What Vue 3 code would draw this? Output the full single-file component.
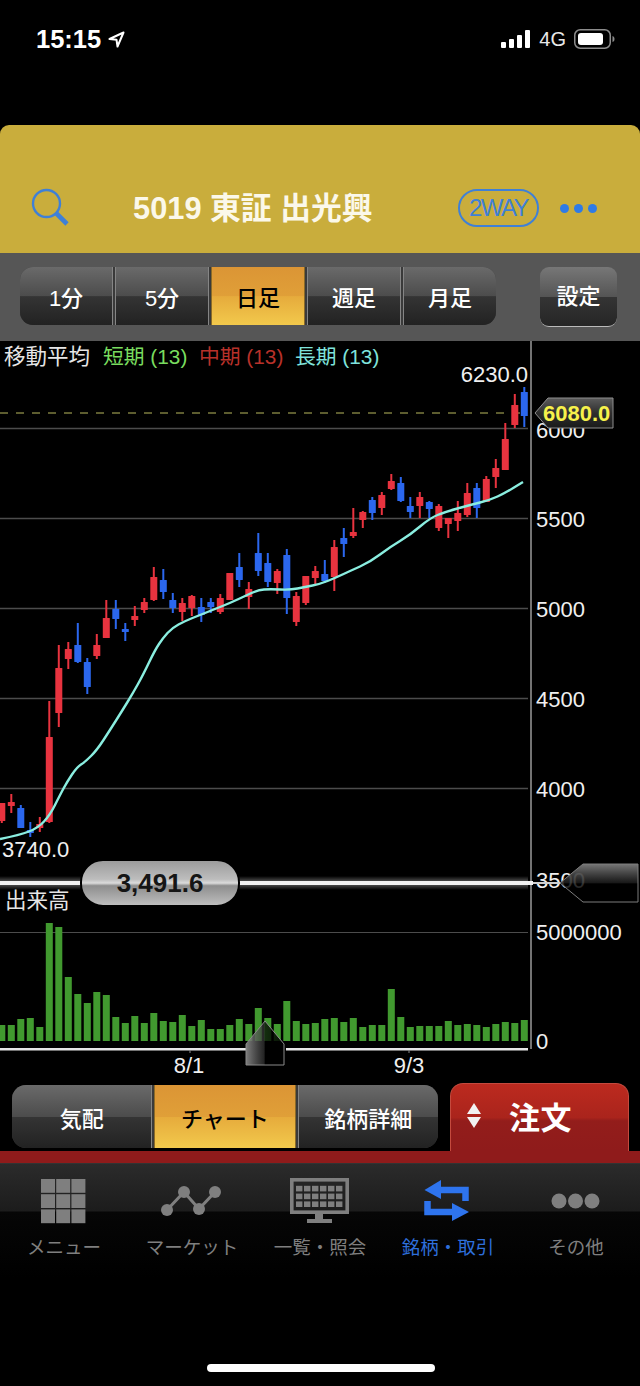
<template>
  <div class="screen">
    <div class="status-bar">
      <div class="status-left">
        <span class="time">15:15</span>
        <svg class="loc" width="17" height="17" viewBox="0 0 17 17">
          <path d="M15.5 1.5 L1.5 8 L8.5 8.7 L9.5 15.5 Z" fill="none" stroke="#fff" stroke-width="2" stroke-linejoin="round" />
        </svg>
      </div>
      <div class="status-right">
        <svg width="30" height="20" viewBox="0 0 30 20">
          <rect x="0" y="13" width="5" height="6" rx="1" fill="#fff" />
          <rect x="8" y="10" width="5" height="9" rx="1" fill="#fff" />
          <rect x="16" y="6" width="5" height="13" rx="1" fill="#fff" />
          <rect x="24" y="1" width="5" height="18" rx="1" fill="#fff" />
        </svg>
        <span class="net">4G</span>
        <svg width="41" height="20" viewBox="0 0 41 20">
          <rect x="0.75" y="0.75" width="35.5" height="18.5" rx="5.5" fill="none" stroke="#8c8c8c" stroke-width="1.5" />
          <rect x="4" y="4" width="25" height="12" rx="3" fill="#fff" />
          <path d="M38.5 7 C40 7.5 40.5 8.5 40.5 10 C40.5 11.5 40 12.5 38.5 13 Z" fill="#8c8c8c" />
        </svg>
      </div>
    </div>

    <header class="title-bar">
      <svg class="search" width="38" height="38" viewBox="0 0 38 38">
        <circle cx="15.5" cy="15.5" r="13.5" fill="none" stroke="#3f80d6" stroke-width="2.4" />
        <path d="M25 25 L36 36" stroke="#3f80d6" stroke-width="4.6" stroke-linecap="butt" />
      </svg>
      <h1 class="title">5019 東証 出光興</h1>
      <span class="two-way">2WAY</span>
      <div class="more"><i></i><i></i><i></i></div>
    </header>

    <div class="period-bar">
      <div class="segments period">
        <div
          v-for="p in periods"
          :key="p"
          class="seg"
          :class="{ active: p === '日足' }"
        >{{ p }}</div>
      </div>
      <div class="settings">設定</div>
    </div>

    <svg class="chart" width="640" height="742" viewBox="0 341 640 742">
      <defs>
        <linearGradient id="priceTag" x1="0" y1="0" x2="0" y2="1">
          <stop offset="0" stop-color="#5c5c5c" />
          <stop offset="0.5" stop-color="#2e2e2e" />
          <stop offset="1" stop-color="#1a1a1a" />
        </linearGradient>
        <linearGradient id="pill" x1="0" y1="0" x2="0" y2="1">
          <stop offset="0" stop-color="#9a9a9a" />
          <stop offset="0.42" stop-color="#bdbdbd" />
          <stop offset="0.5" stop-color="#dcdcdc" />
          <stop offset="0.56" stop-color="#8e8e8e" />
          <stop offset="1" stop-color="#c0c0c0" />
        </linearGradient>
        <linearGradient id="sideHandle" x1="0" y1="0" x2="0" y2="1">
          <stop offset="0" stop-color="#777" />
          <stop offset="0.5" stop-color="#1c1c1c" stop-opacity="0.85" />
          <stop offset="0.52" stop-color="#000" stop-opacity="0.8" />
          <stop offset="1" stop-color="#000" />
        </linearGradient>
        <linearGradient id="bottomHandle" x1="0" y1="0" x2="1" y2="0">
          <stop offset="0" stop-color="#8c8c8c" stop-opacity="0.9" />
          <stop offset="0.48" stop-color="#333" stop-opacity="0.7" />
          <stop offset="0.5" stop-color="#000" stop-opacity="0.7" />
          <stop offset="1" stop-color="#000" stop-opacity="0.9" />
        </linearGradient>
        <linearGradient id="glow" x1="0" y1="0" x2="0" y2="1">
          <stop offset="0" stop-color="#fff" stop-opacity="0" />
          <stop offset="0.5" stop-color="#fff" stop-opacity="0.4" />
          <stop offset="1" stop-color="#fff" stop-opacity="0" />
        </linearGradient>
      </defs>

      <line v-for="y in gridY" :key="y" x1="0" x2="528" :y1="y" :y2="y" class="grid" />
      <line x1="0" x2="528" y1="932.5" y2="932.5" class="grid thin" />
      <line x1="531" x2="531" y1="341" y2="1049" class="axis" />
      <line x1="0" x2="528" y1="413" y2="413" class="last-price" />

      <text x="4" y="364" class="label">移動平均</text>
      <text x="103" y="364" class="legend short">短期 (13)</text>
      <text x="199" y="364" class="legend mid">中期 (13)</text>
      <text x="295" y="364" class="legend long">長期 (13)</text>

      <text x="528" y="382" text-anchor="end" class="num">6230.0</text>
      <text x="2" y="857" class="num">3740.0</text>
      <text v-for="t in priceLabels" :key="t.v" x="536" :y="t.y" class="num">{{ t.v }}</text>
      <text x="536" y="940" class="num">5000000</text>
      <text x="536" y="1049" class="num">0</text>

      <g v-for="(c, i) in candles" :key="i" :fill="c.color" :stroke="c.color">
        <line :x1="c.x" :x2="c.x" :y1="c.high" :y2="c.low" stroke-width="2" />
        <rect :x="c.x - 3.5" :y="c.top" width="7" :height="c.bottom - c.top" stroke="none" rx="0.5" />
      </g>
      <path :d="maPath" class="ma" />

      <polygon points="535,413 548,398 613,398 613,428 548,428" fill="url(#priceTag)" stroke="#8e8e8e" stroke-width="1" />
      <text x="543" y="421" class="tag">6080.0</text>

      <rect x="0" y="876" width="528" height="14" fill="url(#glow)" />
      <rect x="0" y="881" width="533" height="4" fill="#f2f2f2" />
      <rect x="533" y="882" width="28" height="2" fill="#cfcfcf" />
      <polygon points="560,883 583,864 638,864 638,902 583,902" fill="url(#sideHandle)" stroke="#7c7c7c" stroke-width="1" />
      <rect x="81" y="860" width="158" height="46" rx="22" fill="url(#pill)" stroke="#000" stroke-width="2" />
      <text x="160" y="892" text-anchor="middle" class="pill-text">3,491.6</text>

      <text x="5" y="908" class="label">出来高</text>

      <rect
        v-for="(b, i) in bars"
        :key="'v' + i"
        :x="b.x - 3.5"
        :y="b.top"
        width="7"
        :height="1041 - b.top"
        fill="#41992f"
      />

      <rect x="0" y="1048" width="246" height="2.5" fill="#e6e6e6" />
      <rect x="286" y="1048" width="242" height="2.5" fill="#e6e6e6" />
      <line x1="190" x2="190" y1="1050" y2="1053" stroke="#888" />
      <line x1="409" x2="409" y1="1050" y2="1053" stroke="#888" />
      <polygon points="265,1021 284,1044 284,1065 246,1065 246,1044" fill="url(#bottomHandle)" stroke="#8a8a8a" stroke-width="1" />
      <text x="189" y="1073" text-anchor="middle" class="num">8/1</text>
      <text x="409" y="1073" text-anchor="middle" class="num">9/3</text>
    </svg>

    <div class="actions">
      <div class="segments lower">
        <div
          v-for="a in actions"
          :key="a"
          class="seg"
          :class="{ active: a === 'チャート' }"
        >{{ a }}</div>
      </div>
      <div class="order">
        <div class="arrows"><i class="up"></i><i class="down"></i></div>
        <span>注文</span>
      </div>
    </div>
    <div class="red-band"></div>

    <nav class="tab-bar">
      <div class="tab">
        <svg width="64" height="48" viewBox="0 0 64 48">
          <template v-for="r in 3" :key="r">
            <rect
              v-for="col in 3"
              :key="col"
              :x="9 + (col - 1) * 15.2"
              :y="2 + (r - 1) * 15.2"
              width="14"
              height="13.8"
              fill="#7f7f7f"
            />
          </template>
        </svg>
        <span>メニュー</span>
      </div>
      <div class="tab">
        <svg width="64" height="48" viewBox="0 0 64 48">
          <path d="M7 33 L24 15 L39 32 L55 15" fill="none" stroke="#7f7f7f" stroke-width="3" />
          <circle cx="7" cy="33" r="6" fill="#7f7f7f" />
          <circle cx="24" cy="15" r="6" fill="#7f7f7f" />
          <circle cx="39" cy="32" r="6" fill="#7f7f7f" />
          <circle cx="55" cy="15" r="6" fill="#7f7f7f" />
        </svg>
        <span>マーケット</span>
      </div>
      <div class="tab">
        <svg width="64" height="48" viewBox="0 0 64 48">
          <rect x="3.8" y="2.8" width="55.4" height="32.4" fill="none" stroke="#7f7f7f" stroke-width="3.6" />
          <template v-for="r in 3" :key="r">
            <rect
              v-for="col in 6"
              :key="col"
              :x="8 + (col - 1) * 8"
              :y="1 + r * 7.8"
              width="6.4"
              height="5.6"
              fill="#7f7f7f"
            />
          </template>
          <rect x="27" y="36" width="8" height="6" fill="#7f7f7f" />
          <rect x="19" y="42" width="25" height="4" fill="#7f7f7f" />
        </svg>
        <span>一覧・照会</span>
      </div>
      <div class="tab current">
        <svg width="64" height="48" viewBox="0 0 64 48">
          <path d="M22 13 H49.5 V24 M11.5 24 V35 H39" fill="none" stroke="#2e74ee" stroke-width="6.5" />
          <polygon points="25,3 8.5,13 25,22" fill="#2e74ee" />
          <polygon points="36,26 53,35 36,44" fill="#2e74ee" />
        </svg>
        <span>銘柄・取引</span>
      </div>
      <div class="tab">
        <svg width="64" height="48" viewBox="0 0 64 48">
          <circle cx="15" cy="24" r="7.5" fill="#7f7f7f" />
          <circle cx="31.5" cy="24" r="7.5" fill="#7f7f7f" />
          <circle cx="48" cy="24" r="7.5" fill="#7f7f7f" />
        </svg>
        <span>その他</span>
      </div>
    </nav>
    <div class="home-indicator"></div>
  </div>
</template>

<script setup>
import { computed } from 'vue'

const periods = ['1分', '5分', '日足', '週足', '月足']
const actions = ['気配', 'チャート', '銘柄詳細']

const gridY = [428.5, 518.5, 608.5, 698.5, 788.5]
const priceLabels = [
  { v: '6000', y: 438 },
  { v: '5500', y: 527 },
  { v: '5000', y: 617 },
  { v: '4500', y: 707 },
  { v: '4000', y: 797 },
  { v: '3500', y: 888 }
]

// r = red, b = blue: [color, high, body top, body bottom, low]
const rawCandles = [
  ['r', 803, 803, 821, 823], ['r', 794, 802, 806, 813], ['b', 805, 808, 828, 828], ['b', 822, 830, 833, 837],
  ['r', 817, 824, 828, 832], ['r', 701, 737, 822, 823], ['r', 645, 668, 713, 727], ['r', 642, 649, 659, 669],
  ['b', 623, 645, 662, 663], ['b', 658, 662, 687, 694], ['r', 634, 645, 656, 659], ['r', 600, 618, 638, 638],
  ['b', 600, 609, 619, 629], ['b', 623, 629, 632, 641], ['r', 606, 616, 620, 626], ['r', 598, 602, 610, 613],
  ['r', 567, 577, 600, 601], ['b', 569, 580, 592, 599], ['b', 593, 600, 608, 613], ['r', 598, 603, 612, 621],
  ['r', 595, 596, 608, 616], ['b', 598, 607, 615, 622], ['b', 598, 602, 607, 613], ['r', 594, 598, 612, 614],
  ['r', 573, 573, 600, 600], ['b', 553, 567, 580, 587], ['r', 582, 589, 597, 609], ['b', 533, 553, 571, 576],
  ['b', 553, 563, 582, 587], ['r', 569, 571, 583, 594], ['b', 549, 555, 598, 614], ['r', 592, 596, 622, 626],
  ['r', 576, 576, 603, 605], ['r', 566, 571, 578, 585], ['b', 560, 574, 581, 583], ['r', 540, 547, 577, 591],
  ['b', 528, 538, 544, 557], ['r', 508, 532, 536, 538], ['r', 511, 512, 520, 528], ['b', 497, 500, 513, 520],
  ['r', 492, 495, 508, 515], ['r', 474, 481, 489, 490], ['b', 477, 483, 501, 502], ['b', 497, 506, 512, 518],
  ['r', 492, 497, 506, 518], ['b', 501, 502, 509, 518], ['r', 504, 506, 528, 531], ['r', 518, 518, 524, 538],
  ['r', 501, 513, 521, 531], ['r', 483, 493, 515, 517], ['b', 483, 488, 508, 518], ['r', 476, 479, 502, 502],
  ['r', 459, 468, 477, 488], ['r', 423, 439, 470, 470], ['r', 394, 405, 425, 428], ['b', 387, 392, 416, 427]
]

const barX = (i) => 1.8 + i * 9.5

const candles = computed(() =>
  rawCandles.map(([c, high, top, bottom, low], i) => ({
    x: barX(i),
    color: c === 'r' ? '#e8333f' : '#2b67ee',
    high,
    top,
    bottom,
    low
  }))
)

const volumeTops = [
  1025, 1025, 1019, 1018, 1027, 923, 927, 977, 994, 1003, 992, 995, 1017, 1023,
  1016, 1023, 1013, 1021, 1022, 1015, 1026, 1020, 1029, 1029, 1025, 1019, 1024, 1008,
  1018, 1024, 1001, 1021, 1024, 1023, 1019, 1018, 1022, 1018, 1027, 1025, 1025, 989,
  1017, 1027, 1026, 1026, 1026, 1021, 1025, 1024, 1025, 1027, 1024, 1022, 1023, 1020
]
const bars = computed(() => volumeTops.map((top, i) => ({ x: barX(i), top })))

const maPoints = [
  [0, 839], [20, 835], [38, 828], [50, 815], [60, 795], [67, 782], [77, 767], [85, 762],
  [97, 750], [110, 730], [122, 711], [133, 693], [143, 675], [155, 650], [163, 638],
  [172, 628], [185, 621], [200, 615], [215, 609], [230, 603], [245, 596], [258, 590],
  [270, 589], [290, 590], [305, 587], [320, 584], [335, 578], [350, 571], [370, 562],
  [390, 547], [410, 535], [430, 518], [445, 512], [470, 505], [490, 500], [505, 493], [523, 482]
]

// smooth the average through the midpoints of the sampled points
const maPath = computed(() => {
  let d = `M${maPoints[0].join(' ')}`
  for (let i = 1; i < maPoints.length - 1; i++) {
    const [x, y] = maPoints[i]
    const [nx, ny] = maPoints[i + 1]
    d += ` Q${x} ${y} ${(x + nx) / 2} ${(y + ny) / 2}`
  }
  return `${d} L${maPoints[maPoints.length - 1].join(' ')}`
})
</script>

<style scoped>
.screen {
  width: 640px;
  height: 1386px;
  background: #000;
  color: #fff;
  font-family: "Liberation Sans", "Noto Sans CJK JP", sans-serif;
  overflow: hidden;
  position: relative;
}

.status-bar {
  height: 125px;
  box-sizing: border-box;
  padding: 24px 25px 0 36px;
  display: flex;
  justify-content: space-between;
  align-items: flex-start;
}
.status-left {
  display: flex;
  align-items: center;
  gap: 7px;
  height: 30px;
}
.time {
  font-size: 25.5px;
  font-weight: 700;
}
.status-right {
  display: flex;
  align-items: center;
  gap: 8px;
  height: 30px;
}
.net {
  font-size: 20px;
  color: #e8e8e8;
}

.title-bar {
  height: 128px;
  box-sizing: border-box;
  background: #c9ad3c;
  border-radius: 9px 9px 0 0;
  padding: 63px 0 0 31px;
  display: flex;
  align-items: flex-start;
}
.search {
  flex: none;
}
.title {
  margin: 2px 0 0 64px;
  width: 325px;
  font-size: 30.8px;
  font-weight: 700;
  line-height: 38px;
  color: #fbf8ea;
  white-space: nowrap;
}
.two-way {
  width: 81px;
  height: 38px;
  box-sizing: border-box;
  border: 2.5px solid #3f80d6;
  border-radius: 19px;
  color: #3f80d6;
  font-size: 24px;
  letter-spacing: -1.6px;
  line-height: 33px;
  text-align: center;
  margin-top: 1px;
}
.more {
  display: flex;
  gap: 5px;
  margin: 16px 0 0 21px;
}
.more i {
  width: 9px;
  height: 9px;
  border-radius: 50%;
  background: #2f7be6;
}

.period-bar {
  height: 88px;
  box-sizing: border-box;
  background: #565656;
  padding: 14px 23px 0 20px;
  display: flex;
  justify-content: space-between;
  align-items: flex-start;
}

.segments {
  display: flex;
  gap: 2px;
  border-radius: 13px;
  overflow: hidden;
  background: #3a3a3a;
}
.period {
  width: 476px;
  height: 58px;
}
.seg {
  flex: 1;
  display: flex;
  align-items: center;
  justify-content: center;
  font-size: 22px;
  font-weight: 500;
  background: linear-gradient(#6a6a6a, #4c4c4c 50%, #343434 51%, #222);
  border-right: 1px solid #858585;
  border-left: 1px solid #858585;
}
.seg:first-child {
  border-left: 0;
}
.seg:last-child {
  border-right: 0;
}
.seg.active {
  color: #000;
  background: linear-gradient(#db9535, #e09f38 50%, #e6ab3c 51%, #f2c94c);
  border-color: #8a6a28;
}

.settings {
  width: 77px;
  height: 60px;
  box-sizing: border-box;
  border-radius: 9px;
  border-bottom: 1.5px solid #bbb;
  background: linear-gradient(#777, #555 50%, #343434 51%, #262626);
  font-size: 22px;
  font-weight: 500;
  line-height: 60px;
  text-align: center;
}

.chart {
  display: block;
}
.chart text {
  font-family: "Liberation Sans", "Noto Sans CJK JP", sans-serif;
}
.grid {
  stroke: #4c4c4c;
  stroke-width: 1.5;
}
.grid.thin {
  stroke-width: 1;
}
.axis {
  stroke: #9a9a9a;
  stroke-width: 1.5;
}
.last-price {
  stroke: #b9b95e;
  stroke-width: 1;
  stroke-dasharray: 8 8;
}
.label {
  font-size: 21.5px;
  fill: #e6e6e6;
}
.legend {
  font-size: 20.8px;
}
.legend.short {
  fill: #79dc5f;
}
.legend.mid {
  fill: #b8312a;
}
.legend.long {
  fill: #7fe3dc;
}
.num {
  font-size: 22px;
  fill: #f0f0f0;
}
.tag {
  font-size: 22px;
  font-weight: 700;
  fill: #f6f14b;
}
.pill-text {
  font-size: 26px;
  font-weight: 700;
  fill: #151515;
}
.ma {
  fill: none;
  stroke: #8aeee0;
  stroke-width: 2.4;
  stroke-linejoin: round;
}

.actions {
  height: 68px;
  box-sizing: border-box;
  padding: 2px 11px 0 12px;
  display: flex;
  justify-content: space-between;
  align-items: flex-start;
}
.lower {
  width: 426px;
  height: 63px;
  border-radius: 14px;
}
.order {
  width: 179px;
  height: 68px;
  margin-top: -2px;
  box-sizing: border-box;
  border-radius: 13px 13px 0 0;
  border: 1px solid #c44a3e;
  border-bottom: 0;
  background: linear-gradient(#bc2a1f, #aa241c 50%, #931d1b 55%, #8f1b1b);
  display: flex;
  align-items: center;
  padding: 0 0 4px 16px;
}
.order span {
  margin-left: 28px;
  font-size: 31px;
  font-weight: 700;
  letter-spacing: 0.5px;
}
.arrows {
  display: flex;
  flex-direction: column;
  gap: 3px;
}
.arrows i {
  width: 0;
  height: 0;
  border-left: 7px solid transparent;
  border-right: 7px solid transparent;
}
.arrows .up {
  border-bottom: 11px solid #f2f2f2;
}
.arrows .down {
  border-top: 11px solid #f2f2f2;
}

.red-band {
  height: 12px;
  background: #8f1b1b;
}

.tab-bar {
  height: 115px;
  box-sizing: border-box;
  padding-top: 14px;
  display: flex;
  background: linear-gradient(#3b3b3b 0, #2b2b2b 1px, #1c1c1c 48px, #060606 49px, #000 100%);
}
.tab {
  width: 128px;
  display: flex;
  flex-direction: column;
  align-items: center;
  color: #7f7f7f;
  font-size: 18.5px;
  line-height: 22px;
}
.tab span {
  margin-top: 12px;
  white-space: nowrap;
}
.tab.current {
  color: #2e6fdc;
}

.home-indicator {
  position: absolute;
  left: 207px;
  top: 1364px;
  width: 228px;
  height: 8px;
  border-radius: 4px;
  background: #fff;
}
</style>

<style>
html,
body {
  background: #000;
}
</style>
